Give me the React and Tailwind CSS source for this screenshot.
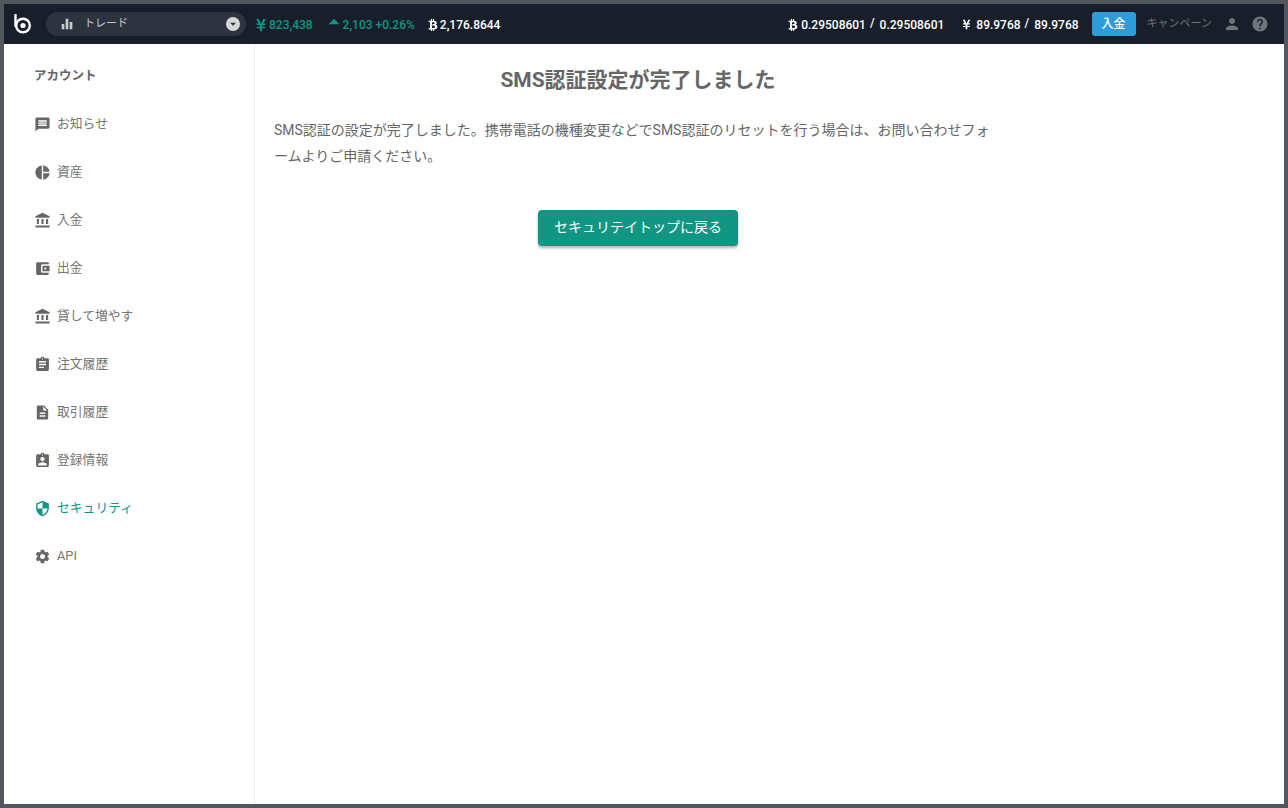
import React from "react";
import {
  MdMessage,
  MdPieChart,
  MdAccountBalance,
  MdAccountBalanceWallet,
  MdAssignment,
  MdDescription,
  MdAssignmentInd,
  MdSecurity,
  MdSettings,
  MdEqualizer,
  MdArrowDropDown,
  MdArrowDropUp,
  MdPerson,
  MdHelp,
} from "react-icons/md";
import { FaBtc, FaYenSign } from "react-icons/fa";

const font = "font-['Roboto','Noto_Sans_CJK_JP',sans-serif]";

const menu = [
  { label: "お知らせ", icon: MdMessage },
  { label: "資産", icon: MdPieChart },
  { label: "入金", icon: MdAccountBalance },
  { label: "出金", icon: MdAccountBalanceWallet },
  { label: "貸して増やす", icon: MdAccountBalance },
  { label: "注文履歴", icon: MdAssignment },
  { label: "取引履歴", icon: MdDescription },
  { label: "登録情報", icon: MdAssignmentInd },
  { label: "セキュリティ", icon: MdSecurity, active: true },
  { label: "API", icon: MdSettings },
];

const Logo = () => (
  <svg width="18" height="20" viewBox="0 0 18 20" fill="none">
    <path d="M1.5 1v11" stroke="#fff" strokeWidth="2.4" strokeLinecap="round" />
    <circle cx="9" cy="11.5" r="6.8" stroke="#fff" strokeWidth="2.4" />
    <circle cx="9" cy="11.5" r="2.6" fill="#fff" />
  </svg>
);

const Header = () => (
  <div className="h-10 flex items-center bg-[#181f2b] text-white text-xs font-medium">
    <div className="w-[42px] pl-[10px] flex items-center">
      <Logo />
    </div>
    <div className="w-[200px] h-6 rounded-full bg-[#2d333f] flex items-center pl-[13px] pr-[6px] text-[#c9cbcf] font-normal text-[11px]">
      <MdEqualizer size={16} className="text-[#c9cbcf]" />
      <span className="ml-[9px] flex-1 pt-px">トレード</span>
      <span className="w-[14px] h-[14px] rounded-full bg-[#d6d7d9] flex items-center justify-center">
        <MdArrowDropDown size={14} className="text-[#333]" />
      </span>
    </div>
    <div className="ml-[9px] flex items-center text-[#0f9683] pt-px">
      <FaYenSign size={14} className="-ml-[1px]" />
      <span className="ml-[1px]">823,438</span>
    </div>
    <div className="ml-[8px] flex items-center text-[#0f9683] pt-px">
      <MdArrowDropUp size={26} className="mt-[-5px]" />
      <span className="-ml-[4px]">2,103 +0.26%</span>
    </div>
    <div className="ml-[12px] flex items-center pt-px">
      <FaBtc size={12} />
      <span className="ml-[1px]">2,176.8644</span>
    </div>
    <div className="ml-auto flex items-center">
      <div className="flex items-center pt-px">
        <FaBtc size={12} />
        <span className="ml-[2px]">0.29508601</span>
        <span className="ml-[4px] mr-[5px] mt-[-4px]">/</span>
        <span>0.29508601</span>
        <FaYenSign size={11} className="ml-[17px]" />
        <span className="ml-[4px]">89.9768</span>
        <span className="ml-[4px] mr-[5px] mt-[-4px]">/</span>
        <span>89.9768</span>
      </div>
      <button className="ml-[13px] w-11 h-6 rounded-[3px] bg-[#2d9cdb] text-white text-xs font-medium">入金</button>
      <span className="ml-[11px] pt-px text-[#6f737a] text-[11px] font-normal">キャンペーン</span>
      <MdPerson size={18} className="ml-[11px] text-[#6f737a]" />
      <MdHelp size={18} className="ml-[10px] mr-[15px] text-[#6f737a]" />
    </div>
  </div>
);

const Sidebar = () => (
  <div className="w-[251px] shrink-0 border-r border-[#eeeeee] pt-[8px] text-[#666666]">
    <div className="h-12 flex items-center pl-[30px] text-[12.5px] font-bold">アカウント</div>
    {menu.map((item) => (
      <div
        key={item.label}
        className={item.active ? "h-12 flex items-center pl-[30px] text-[12.8px] text-[#0f9683]" : "h-12 flex items-center pl-[30px] text-[12.8px]"}
      >
        <item.icon size={17} className="shrink-0" />
        <span className={item.active ? "ml-[6px]" : "ml-[6px] text-[#757575]"}>{item.label}</span>
      </div>
    ))}
  </div>
);

export default function App() {
  return (
    <div className={`${font} antialiased h-screen flex flex-col border-4 border-[#53565c] bg-white overflow-hidden`}>
      <Header />
      <div className="flex flex-1 min-h-0">
        <Sidebar />
        <div className="pl-[19px]">
          <div className="w-[728px] text-[#666666]">
            <h1 className="mt-[22px] h-7 leading-7 text-center text-[21px] font-bold">SMS認証設定が完了しました</h1>
            <p className="mt-[23px] w-[720px] text-sm leading-[26px]">
              SMS認証の設定が完了しました。携帯電話の機種変更などでSMS認証のリセットを行う場合は、お問い合わせフォームよりご申請ください。
            </p>
            <div className="mt-[41px] flex justify-center">
              <button className="w-[200px] h-9 pb-[2px] rounded bg-[#109683] text-white text-sm shadow-[0_2px_3px_rgba(0,0,0,0.3)]">
                セキュリテイトップに戻る
              </button>
            </div>
          </div>
        </div>
      </div>
    </div>
  );
}
